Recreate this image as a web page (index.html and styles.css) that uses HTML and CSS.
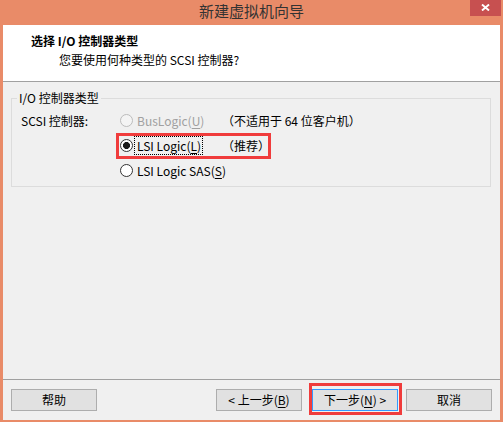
FILE: index.html
```html
<!DOCTYPE html>
<html lang="zh-CN">
<head>
<meta charset="utf-8">
<title>新建虚拟机向导</title>
<link rel="stylesheet" href="styles.css">
</head>
<body>
<div class="window">
  <div class="titlebar">
    <span class="title">新建虚拟机向导</span>
    <span class="close"><svg width="9" height="7" viewBox="0 0 9 7"><path d="M1 0.5 L8 6.5 M8 0.5 L1 6.5" stroke="#fff" stroke-width="1.9" fill="none"/></svg></span>
  </div>
  <div class="client">
    <div class="header">
      <div class="h-title">选择 I/O 控制器类型</div>
      <div class="h-sub">您要使用何种类型的 SCSI 控制器?</div>
    </div>
    <div class="body">
      <fieldset class="group">
        <legend>I/O 控制器类型</legend>
        <div class="group-row">
          <div class="field-label">SCSI 控制器:</div>
          <div class="options">
            <div class="opt-row">
              <span class="opt"><span class="radio disabled"></span><span class="opt-text disabled">BusLogic(<u>U</u>)</span></span>
              <span class="note">（不适用于 64 位客户机）</span>
            </div>
            <div class="opt-row marked">
              <span class="opt"><span class="radio checked"></span><span class="opt-text focus">LSI Logic(<u>L</u>)</span></span>
              <span class="note">（推荐）</span>
              <span class="highlight row-hl"></span>
            </div>
            <div class="opt-row">
              <span class="opt"><span class="radio"></span><span class="opt-text">LSI Logic SAS(<u>S</u>)</span></span>
            </div>
          </div>
        </div>
      </fieldset>
    </div>
    <div class="footer">
      <button class="btn">帮助</button>
      <span class="spacer"></span>
      <button class="btn back">&lt; 上一步(<u>B</u>)</button>
      <span class="btn-wrap">
        <button class="btn default">下一步(<u>N</u>) &gt;</button>
        <span class="highlight btn-hl"></span>
      </span>
      <button class="btn">取消</button>
    </div>
  </div>
</div>
</body>
</html>
```

FILE: styles.css
```css
* { box-sizing: border-box; }
html, body { margin: 0; padding: 0; }
body {
  font-family: "Noto Sans CJK SC", "Noto Sans", sans-serif;
  font-size: 12px;
  color: #000;
  background: #e98b68;
}
.window {
  width: 503px;
  height: 422px;
  background: #e98b68;
  display: flex;
  flex-direction: column;
}
.titlebar {
  height: 25px;
  display: grid;
  grid-template-columns: 1fr auto 1fr;
}
.title {
  grid-column: 2;
  font-size: 15px;
  line-height: 21px;
  color: #333;
}
.close {
  grid-column: 3;
  justify-self: end;
  align-self: start;
  width: 31px;
  height: 16px;
  margin-right: 2px;
  background: #c75050;
  display: flex;
  align-items: center;
  justify-content: center;
}
.close svg { display: block; margin-top: -2px; }
.client {
  flex: 1;
  margin: 0 3px 2px 3px;
  background: #f0f0f0;
  display: flex;
  flex-direction: column;
}
.header {
  height: 57px;
  background: #fff;
  border-bottom: 1px solid #a0a0a0;
  padding: 8px 0 0 28px;
}
.h-title {
  font-weight: bold;
  line-height: 16px;
}
.h-sub {
  line-height: 16px;
  margin-top: 3px;
  padding-left: 28px;
}
.body {
  flex: 1;
  padding: 8px 9px 0 8px;
}
.group {
  margin: 0;
  min-width: 0;
  border: 1px solid #dcdcdc;
  padding: 2px 8px 3px 9px;
}
.group legend {
  padding: 0 2px;
  margin-left: -4px;
  line-height: 16px;
}
.group-row {
  display: flex;
}
.field-label {
  width: 99px;
  line-height: 25px;
}
.options {
  display: flex;
  flex-direction: column;
}
.opt-row {
  height: 25px;
  display: flex;
  align-items: center;
}
.marked { position: relative; }
.opt {
  width: 102px;
  display: flex;
  align-items: center;
}
.radio {
  width: 13px;
  height: 13px;
  border-radius: 50%;
  border: 1px solid #333;
  background: #fff;
  margin-right: 4px;
  flex: none;
}
.radio.checked {
  background: radial-gradient(circle, #1a1a1a 0 3.2px, #fff 3.8px);
}
.radio.disabled {
  border-color: #bcbcbc;
  background: #f4f4f4;
}
.opt-text {
  line-height: 15px;
  white-space: nowrap;
}
.opt-text.disabled { color: #a0a0a0; }
.opt-text.focus {
  outline: 1px dotted #000;
  outline-offset: 1px;
  margin-left: -1px;
  padding-left: 1px;
}
.note { white-space: nowrap; line-height: 15px; }
.highlight {
  position: absolute;
  border: 3px solid #f03c3c;
  pointer-events: none;
}
.row-hl {
  left: -4px;
  top: 0;
  width: 155px;
  height: 26px;
}
.footer {
  height: 41px;
  border-top: 1px solid #a0a0a0;
  display: flex;
  align-items: flex-start;
  padding: 9px 8px 0 8px;
}
.spacer { flex: 1; }
.btn {
  width: 86px;
  height: 22px;
  background: #e1e1e1;
  border: 1px solid #adadad;
  font-family: inherit;
  font-size: 12px;
  color: #000;
  padding: 0;
  line-height: 18px;
  border-radius: 0;
}
.back { margin-right: 10px; }
.btn-wrap {
  position: relative;
  margin-right: 8px;
  display: flex;
}
.btn.default { border-color: #3399ff; }
.btn-hl {
  left: -3px;
  top: -6px;
  width: 93px;
  height: 32px;
}
u { text-decoration: underline; text-underline-offset: 2px; }
```
